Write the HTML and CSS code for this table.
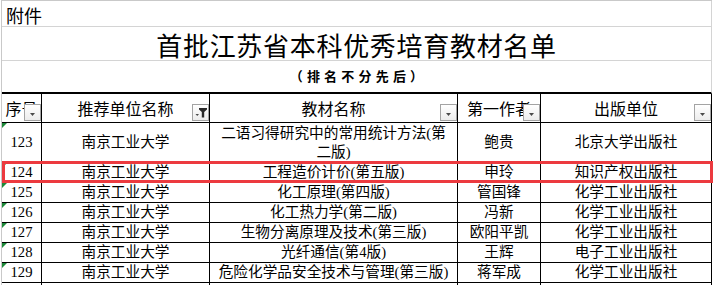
FILE: index.html
```
<!DOCTYPE html>
<html lang="zh-CN">
<head>
<meta charset="utf-8">
<title>首批江苏省本科优秀培育教材名单</title>
<link rel="stylesheet" href="styles.css">
</head>
<body>
<div class="sheet">
  <div class="row r1"><span class="attach">附件</span></div>
  <div class="row r2"><h1 class="title">首批江苏省本科优秀培育教材名单</h1></div>
  <div class="row r3"><p class="sub">（排名不分先后）</p></div>

  <div class="grid">
    <div class="c hd">序号<span class="btn"><svg width="15" height="15" viewBox="0 0 15 15"><path d="M5 8h5l-2.5 3z" fill="#4a4a4a"/></svg></span></div>
    <div class="c hd">推荐单位名称<span class="btn"><svg width="15" height="15" viewBox="0 0 15 15"><path d="M2.5 9h3.5l-1.75 2z" fill="#4a4a4a"/><path d="M6 3h8v1.5l-2.8 2.5v5.5h-2.4v-5.5l-2.8-2.5z" fill="#2a2a2a"/></svg></span></div>
    <div class="c hd">教材名称<span class="btn"><svg width="15" height="15" viewBox="0 0 15 15"><path d="M5 8h5l-2.5 3z" fill="#4a4a4a"/></svg></span></div>
    <div class="c hd">第一作者<span class="btn"><svg width="15" height="15" viewBox="0 0 15 15"><path d="M5 8h5l-2.5 3z" fill="#4a4a4a"/></svg></span></div>
    <div class="c hd">出版单位<span class="btn"><svg width="15" height="15" viewBox="0 0 15 15"><path d="M5 8h5l-2.5 3z" fill="#4a4a4a"/></svg></span></div>

    <div class="c num">123</div>
    <div class="c">南京工业大学</div>
    <div class="c wrap">二语习得研究中的常用统计方法(第<br>二版)</div>
    <div class="c">鲍贵</div>
    <div class="c">北京大学出版社</div>

    <div class="c num">124</div>
    <div class="c">南京工业大学</div>
    <div class="c">工程造价计价(第五版)</div>
    <div class="c">申玲</div>
    <div class="c">知识产权出版社</div>

    <div class="c num">125</div>
    <div class="c">南京工业大学</div>
    <div class="c">化工原理(第四版)</div>
    <div class="c">管国锋</div>
    <div class="c">化学工业出版社</div>

    <div class="c num">126</div>
    <div class="c">南京工业大学</div>
    <div class="c">化工热力学(第二版)</div>
    <div class="c">冯新</div>
    <div class="c">化学工业出版社</div>

    <div class="c num">127</div>
    <div class="c">南京工业大学</div>
    <div class="c">生物分离原理及技术(第三版)</div>
    <div class="c">欧阳平凯</div>
    <div class="c">化学工业出版社</div>

    <div class="c num">128</div>
    <div class="c">南京工业大学</div>
    <div class="c">光纤通信(第4版)</div>
    <div class="c">王辉</div>
    <div class="c">电子工业出版社</div>

    <div class="c num">129</div>
    <div class="c">南京工业大学</div>
    <div class="c">危险化学品安全技术与管理(第三版)</div>
    <div class="c">蒋军成</div>
    <div class="c">化学工业出版社</div>

    <div class="c stub"></div>
    <div class="c stub"></div>
    <div class="c stub"></div>
    <div class="c stub"></div>
    <div class="c stub"></div>
  </div>

  <div class="mark"></div>
</div>
</body>
</html>
```

FILE: styles.css
```
html, body {
  margin: 0;
  padding: 0;
  background: #fff;
}
body {
  width: 714px;
  height: 285px;
  overflow: hidden;
  font-family: "Liberation Serif", "Noto Sans CJK SC", serif;
  color: #000;
}
.sheet {
  position: relative;
  margin-left: 1px;
  width: 711px;
  border-left: 1px solid #c9c9c9;
  border-top: 1px solid #c9c9c9;
  box-sizing: border-box;
}
.row {
  width: 710px;
  box-sizing: border-box;
  border-right: 1px solid #d4d4d4;
  border-bottom: 1px solid #d4d4d4;
  display: flex;
}
.r1 {
  height: 26px;
  align-items: flex-end;
  padding: 0 0 0 4px;
}
.attach {
  font-family: "Noto Sans CJK SC", sans-serif;
  font-size: 18px;
  line-height: 22px;
}
.r2 {
  height: 34px;
  align-items: center;
  justify-content: center;
}
.title {
  margin: 0;
  font-family: "Noto Sans CJK SC", sans-serif;
  font-weight: normal;
  font-size: 26px;
  letter-spacing: 0.7px;
  line-height: 32px;
  padding-top: 2px;
}
.r3 {
  height: 33px;
  border-bottom: 2px solid #000;
  align-items: center;
  justify-content: center;
}
.sub {
  margin: 0;
  font-family: "Noto Sans CJK SC", sans-serif;
  font-weight: bold;
  font-size: 13px;
  letter-spacing: 4.2px;
  line-height: 16px;
  padding-left: 4px;
  padding-bottom: 1px;
}
.grid {
  display: grid;
  grid-template-columns: 40px 168px 248px 83px 171px;
  grid-template-rows: 29px 40px repeat(6, 20px) 2px;
  width: 710px;
}
.c {
  position: relative;
  box-sizing: border-box;
  border-right: 1px solid #000;
  border-bottom: 1px solid #000;
  display: flex;
  align-items: center;
  justify-content: center;
  text-align: center;
  font-size: 14.67px;
  line-height: 19px;
  white-space: nowrap;
  overflow: hidden;
}
.hd {
  font-family: "Noto Sans CJK SC", sans-serif;
  font-size: 16px;
  line-height: 20px;
  overflow: visible;
}
.wrap {
  white-space: normal;
  padding: 0 2px;
  line-height: 19px;
}
.num {
  font-family: "Liberation Serif", serif;
}
.num::before {
  content: "";
  position: absolute;
  left: 0;
  top: 0;
  border-top: 5px solid #1e8a3a;
  border-right: 5px solid transparent;
}
.stub {
  border-bottom: 0;
}
.btn {
  position: absolute;
  right: 0;
  bottom: 1px;
  width: 17px;
  height: 17px;
  box-sizing: border-box;
  border: 1px solid #a3a3a3;
  background: linear-gradient(#ffffff, #ececec);
  display: flex;
}
.mark {
  position: absolute;
  left: 0;
  top: 160px;
  width: 711px;
  height: 22px;
  box-sizing: border-box;
  border: 3px solid #ec3a3f;
}
```
